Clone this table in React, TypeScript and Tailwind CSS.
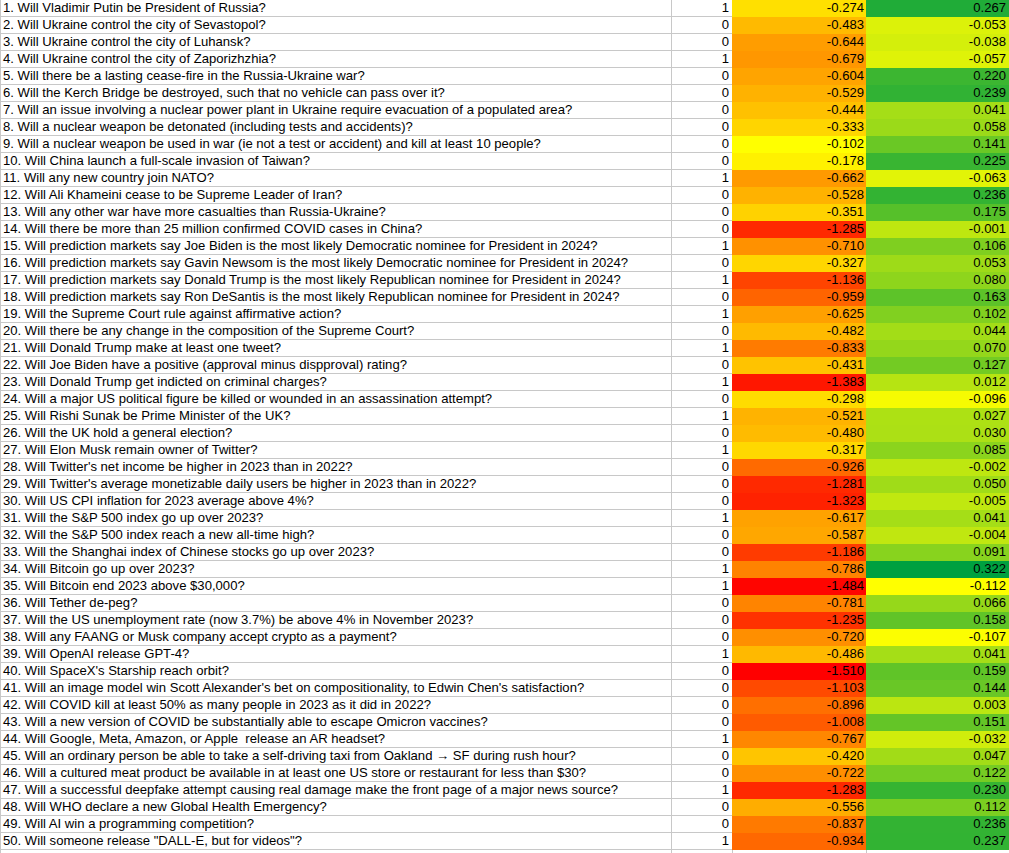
const rows: [string, number, number, number][] = [
  ["Will Vladimir Putin be President of Russia?", 1, -0.274, 0.267],
  ["Will Ukraine control the city of Sevastopol?", 0, -0.483, -0.053],
  ["Will Ukraine control the city of Luhansk?", 0, -0.644, -0.038],
  ["Will Ukraine control the city of Zaporizhzhia?", 1, -0.679, -0.057],
  ["Will there be a lasting cease-fire in the Russia-Ukraine war?", 0, -0.604, 0.22],
  ["Will the Kerch Bridge be destroyed, such that no vehicle can pass over it?", 0, -0.529, 0.239],
  ["Will an issue involving a nuclear power plant in Ukraine require evacuation of a populated area?", 0, -0.444, 0.041],
  ["Will a nuclear weapon be detonated (including tests and accidents)?", 0, -0.333, 0.058],
  ["Will a nuclear weapon be used in war (ie not a test or accident) and kill at least 10 people?", 0, -0.102, 0.141],
  ["Will China launch a full-scale invasion of Taiwan?", 0, -0.178, 0.225],
  ["Will any new country join NATO?", 1, -0.662, -0.063],
  ["Will Ali Khameini cease to be Supreme Leader of Iran?", 0, -0.528, 0.236],
  ["Will any other war have more casualties than Russia-Ukraine?", 0, -0.351, 0.175],
  ["Will there be more than 25 million confirmed COVID cases in China?", 0, -1.285, -0.001],
  ["Will prediction markets say Joe Biden is the most likely Democratic nominee for President in 2024?", 1, -0.71, 0.106],
  ["Will prediction markets say Gavin Newsom is the most likely Democratic nominee for President in 2024?", 0, -0.327, 0.053],
  ["Will prediction markets say Donald Trump is the most likely Republican nominee for President in 2024?", 1, -1.136, 0.08],
  ["Will prediction markets say Ron DeSantis is the most likely Republican nominee for President in 2024?", 0, -0.959, 0.163],
  ["Will the Supreme Court rule against affirmative action?", 1, -0.625, 0.102],
  ["Will there be any change in the composition of the Supreme Court?", 0, -0.482, 0.044],
  ["Will Donald Trump make at least one tweet?", 1, -0.833, 0.07],
  ["Will Joe Biden have a positive (approval minus dispproval) rating?", 0, -0.431, 0.127],
  ["Will Donald Trump get indicted on criminal charges?", 1, -1.383, 0.012],
  ["Will a major US political figure be killed or wounded in an assassination attempt?", 0, -0.298, -0.096],
  ["Will Rishi Sunak be Prime Minister of the UK?", 1, -0.521, 0.027],
  ["Will the UK hold a general election?", 0, -0.48, 0.03],
  ["Will Elon Musk remain owner of Twitter?", 1, -0.317, 0.085],
  ["Will Twitter's net income be higher in 2023 than in 2022?", 0, -0.926, -0.002],
  ["Will Twitter's average monetizable daily users be higher in 2023 than in 2022?", 0, -1.281, 0.05],
  ["Will US CPI inflation for 2023 average above 4%?", 0, -1.323, -0.005],
  ["Will the S&P 500 index go up over 2023?", 1, -0.617, 0.041],
  ["Will the S&P 500 index reach a new all-time high?", 0, -0.587, -0.004],
  ["Will the Shanghai index of Chinese stocks go up over 2023?", 0, -1.186, 0.091],
  ["Will Bitcoin go up over 2023?", 1, -0.786, 0.322],
  ["Will Bitcoin end 2023 above $30,000?", 1, -1.484, -0.112],
  ["Will Tether de-peg?", 0, -0.781, 0.066],
  ["Will the US unemployment rate (now 3.7%) be above 4% in November 2023?", 0, -1.235, 0.158],
  ["Will any FAANG or Musk company accept crypto as a payment?", 0, -0.72, -0.107],
  ["Will OpenAI release GPT-4?", 1, -0.486, 0.041],
  ["Will SpaceX's Starship reach orbit?", 0, -1.51, 0.159],
  ["Will an image model win Scott Alexander's bet on compositionality, to Edwin Chen's satisfaction?", 0, -1.103, 0.144],
  ["Will COVID kill at least 50% as many people in 2023 as it did in 2022?", 0, -0.896, 0.003],
  ["Will a new version of COVID be substantially able to escape Omicron vaccines?", 0, -1.008, 0.151],
  ["Will Google, Meta, Amazon, or Apple \u00a0release an AR headset?", 1, -0.767, -0.032],
  ["Will an ordinary person be able to take a self-driving taxi from Oakland \u2192 SF during rush hour?", 0, -0.42, 0.047],
  ["Will a cultured meat product be available in at least one US store or restaurant for less than $30?", 0, -0.722, 0.122],
  ["Will a successful deepfake attempt causing real damage make the front page of a major news source?", 1, -1.283, 0.23],
  ["Will WHO declare a new Global Health Emergency?", 0, -0.556, 0.112],
  ["Will AI win a programming competition?", 0, -0.837, 0.236],
  ["Will someone release \"DALL-E, but for videos\"?", 1, -0.934, 0.237],
]

// red -> yellow scale for the score column
function scoreColor(v: number) {
  const t = (-0.102 - v) / (1.51 - 0.102)
  return `rgb(255, ${Math.round(255 * (1 - t))}, 0)`
}

// yellow -> green scale for the delta column
function deltaColor(v: number) {
  const t = (v + 0.112) / (0.322 + 0.112)
  return `rgb(${Math.round(255 * (1 - t))}, ${Math.round(255 - 95 * t)}, ${Math.round(64 * t)})`
}

export default function App() {
  return (
    <div className="w-[1009px] h-[853px] overflow-hidden bg-white text-[13.1px] leading-[16px] text-black font-['Liberation_Sans',Arial,sans-serif]">
      {rows.map(([q, hit, score, delta], i) => (
        <div key={i} className="flex h-[17px]">
          <div className="w-[672px] shrink-0 border-l border-r border-b border-[#c8c8c8] pl-[2px] whitespace-pre overflow-hidden">
            {i + 1}. {q}
          </div>
          <div className="w-[60px] shrink-0 border-b border-[#c8c8c8] pr-[3px] text-right">{hit}</div>
          <div className="w-[134px] shrink-0 pr-[2px] text-right" style={{ backgroundColor: scoreColor(score) }}>
            {score.toFixed(3)}
          </div>
          <div className="flex-1 pr-[3px] text-right" style={{ backgroundColor: deltaColor(delta) }}>
            {delta.toFixed(3)}
          </div>
        </div>
      ))}
      <div className="flex h-[17px]">
        <div className="w-[672px] shrink-0 border-l border-r border-[#c8c8c8]" />
        <div className="w-[60px] shrink-0" />
        <div className="w-[134px] shrink-0 border-l border-[#c8c8c8]" />
        <div className="flex-1 border-l border-[#c8c8c8]" />
      </div>
    </div>
  )
}
